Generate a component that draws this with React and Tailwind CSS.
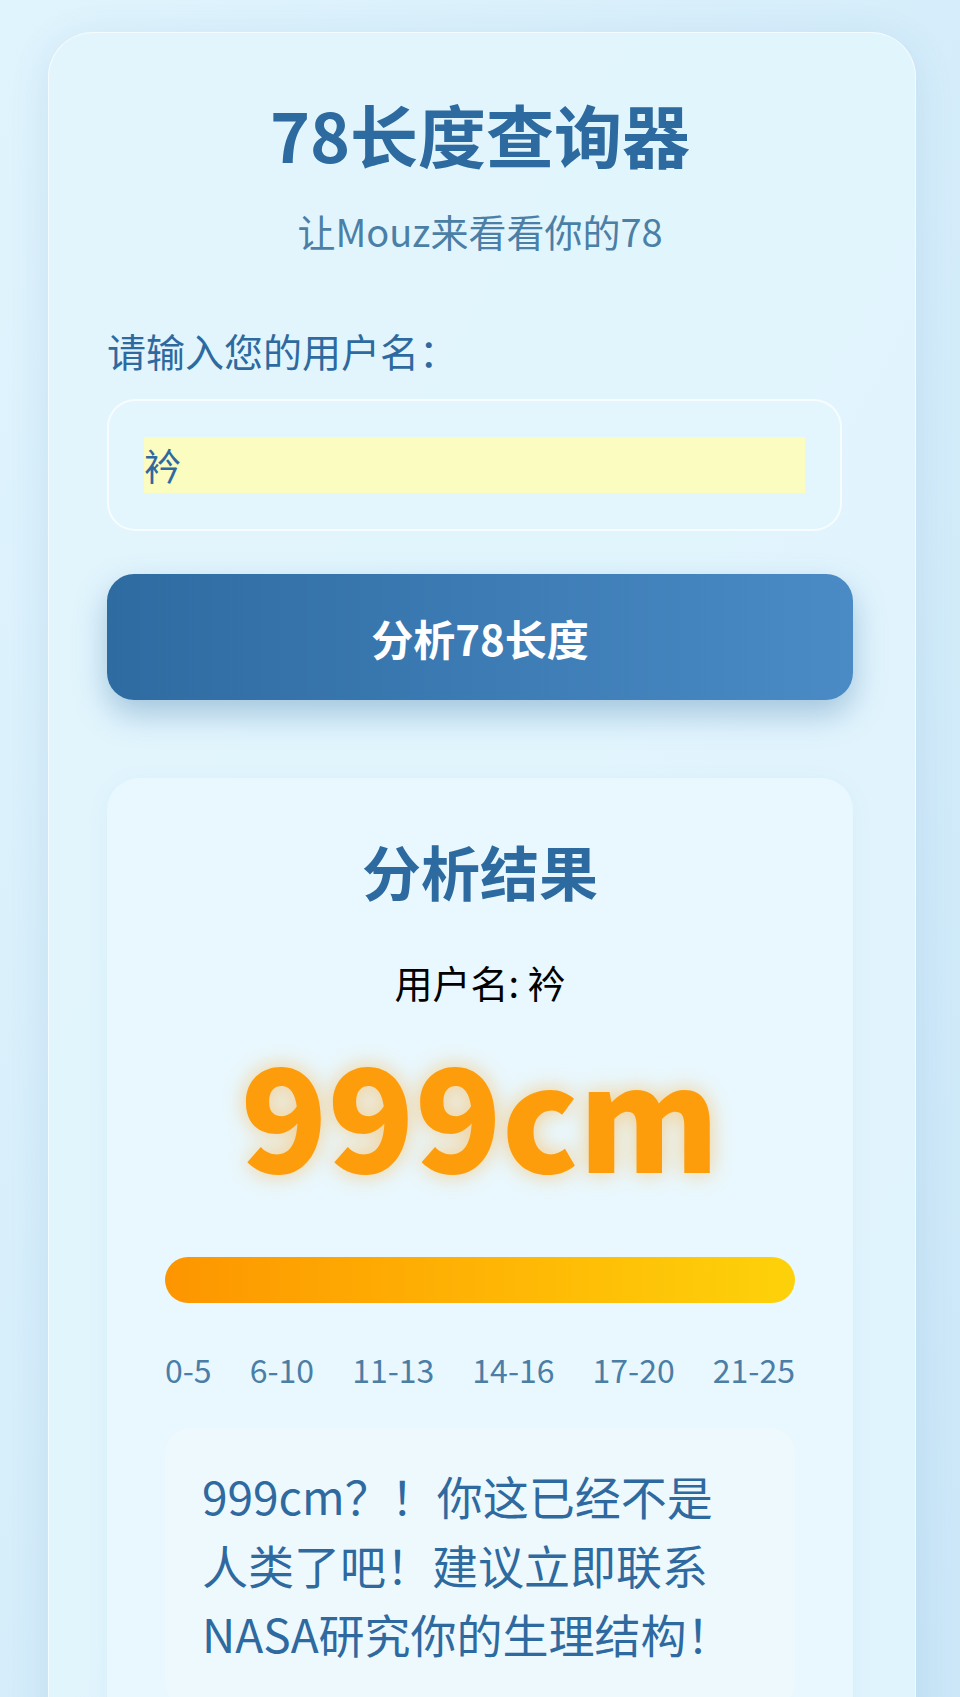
const scale = ['0-5', '6-10', '11-13', '14-16', '17-20', '21-25'];

export default function App() {
  return (
    <div className="h-[1697px] overflow-hidden bg-gradient-to-br from-[#e0f4fd] to-[#cbe7f8] pt-[32px] pl-[48px] font-['Noto_Sans_CJK_SC',sans-serif]">
      <div className="w-[868px] rounded-[45px] border border-white/60 bg-[#e2f5fd]/90 pt-[61px] pl-[58px] pr-[62px] pb-[80px] shadow-[0_8px_40px_rgba(40,110,170,0.12)]">
        <h1 className="text-center text-[68px] leading-[80px] font-bold text-[#2c6a9f]">78长度查询器</h1>
        <p className="mt-[35px] text-center text-[38px] leading-[44px] text-[#4b7fa6]">让Mouz来看看你的78</p>

        {/* 输入 */}
        <label className="mt-[73px] block text-[39px] leading-[48px] text-[#2e6aa0]">请输入您的用户名：</label>
        <div className="mt-[25px] h-[132px] w-[735px] rounded-[28px] border-2 border-white/70 bg-[#e4f6fd] px-[35px] py-[36px]">
          <input
            readOnly
            value="衿"
            className="block h-[56px] w-full bg-[#fbfcc0] text-[37px] leading-[56px] text-[#2e6aa0] outline-none"
          />
        </div>

        <button className="mt-[43px] flex h-[126px] w-full items-center justify-center rounded-[27px] bg-gradient-to-r from-[#2e6ba1] to-[#4a8bc6] text-[42px] font-bold text-white shadow-[0_14px_32px_rgba(47,108,162,0.35)]">
          分析78长度
        </button>

        {/* 结果 */}
        <div className="mt-[78px] rounded-[32px] bg-[#e9f8fe] px-[58px] pt-[58px] pb-[60px] shadow-[0_4px_24px_rgba(40,110,170,0.05)]">
          <h2 className="text-center text-[59px] leading-[70px] font-bold text-[#2c6a9f]">分析结果</h2>
          <p className="mt-[52px] text-center text-[38px] leading-[48px] text-black">用户名: 衿</p>
          <div className="mt-[26px] text-center text-[143px] leading-[158px] font-black text-[#fd9d0c] [text-shadow:0_0_22px_rgba(255,150,0,0.45)]">
            999cm
          </div>
          <div className="mt-[67px] h-[46px] rounded-full bg-gradient-to-r from-[#fd9500] to-[#fdd20a]" />
          <div className="mt-[46px] flex justify-between text-[32px] leading-[40px] text-[#4b7ea6]">
            {scale.map(s => (
              <span key={s}>{s}</span>
            ))}
          </div>
          <div className="mt-[39px] rounded-[26px] bg-[#eef9fe] pl-[37px] pt-[33px] pb-[40px]">
            <p className="w-[545px] text-[46px] leading-[69px] text-[#2e6aa0]">
              999cm？！你这已经不是人类了吧！建议立即联系NASA研究你的生理结构！
            </p>
          </div>
        </div>
      </div>
    </div>
  );
}
